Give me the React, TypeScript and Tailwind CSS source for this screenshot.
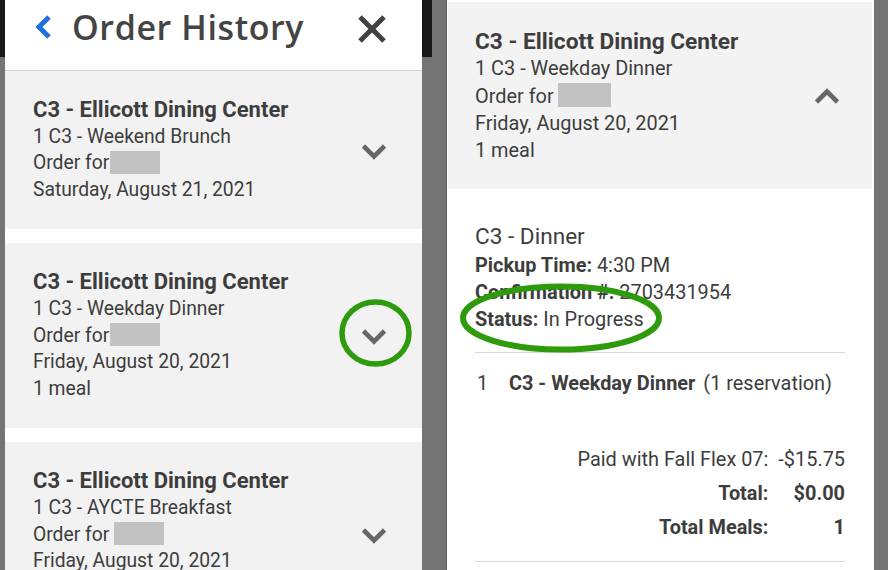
import React from "react";

const TEXT = "text-[#3d3d3d]";

function ChevronDown({ up = false, className = "" }: { up?: boolean; className?: string }) {
  return (
    <svg width="26" height="18" viewBox="0 0 26 18" className={`shrink-0 ${className}`}>
      <polyline
        points={up ? "2.5,15 13,4.5 23.5,15" : "2.5,3 13,13.5 23.5,3"}
        fill="none"
        stroke="#676767"
        strokeWidth="4.6"
        strokeLinejoin="miter"
      />
    </svg>
  );
}

function LeftCard({
  sub,
  date,
  meal,
  spaced,
}: {
  sub: string;
  date: string;
  meal?: boolean;
  spaced?: boolean;
}) {
  return (
    <div className="bg-[#f2f2f2] flex items-center pl-[28px] pr-[35px] pt-[26px] pb-[26px] shrink-0">
      <div className={`flex-1 ${TEXT} text-[19.3px] leading-[26.6px]`}>
        <div className="font-bold text-[22px]">C3 - Ellicott Dining Center</div>
        <div>{sub}</div>
        <div className="flex items-center">
          <span>Order for</span>
          <span
            className={`inline-block w-[50px] h-[23px] bg-[#c2c2c2] -mt-[2px] ${spaced ? "ml-[5px]" : "ml-[1px]"}`}
          />
        </div>
        <div>{date}</div>
        {meal && <div>1 meal</div>}
      </div>
      <ChevronDown className="mt-[3px]" />
    </div>
  );
}

export default function App() {
  return (
    <div className="w-[888px] h-[570px] bg-[#747474] flex overflow-hidden relative font-['Roboto',sans-serif]">
      {/* left strip */}
      <div className="w-[5px] shrink-0 flex flex-col">
        <div className="h-[57px] bg-[#181818]" />
      </div>

      {/* left panel */}
      <div className="w-[417px] shrink-0 bg-white flex flex-col">
        <div className="h-[71px] shrink-0 border-b border-[#d6d6d6] flex items-start">
          <div className="h-[54px] w-full flex items-center pl-[28px] pr-[35px]">
            <svg width="22" height="26" viewBox="0 0 22 26" className="shrink-0">
              <polyline points="16,3 6,13 16,23" fill="none" stroke="#1f6fdf" strokeWidth="5" strokeLinejoin="miter" />
            </svg>
            <div className="ml-[17px] flex-1 font-['Open_Sans',sans-serif] font-semibold text-[34px] leading-[40px] text-[#444444] tracking-[0.6px]">
              Order History
            </div>
            <svg width="30" height="30" viewBox="0 0 30 30" className="shrink-0 mt-[4px]">
              <line x1="3" y1="3" x2="27" y2="27" stroke="#414141" strokeWidth="5" />
              <line x1="27" y1="3" x2="3" y2="27" stroke="#414141" strokeWidth="5" />
            </svg>
          </div>
        </div>
        <LeftCard sub="1 C3 - Weekend Brunch" date="Saturday, August 21, 2021" />
        <div className="h-[14px] shrink-0" />
        <LeftCard sub="1 C3 - Weekday Dinner" date="Friday, August 20, 2021" meal />
        <div className="h-[14px] shrink-0" />
        <LeftCard sub="1 C3 - AYCTE Breakfast" date="Friday, August 20, 2021" meal spaced />
      </div>

      {/* middle gap */}
      <div className="w-[25px] shrink-0 flex">
        <div className="w-[10px] h-[57px] bg-[#181818]" />
        <div className="flex-1 border-r border-[#5f5f5f]" />
      </div>

      {/* right panel */}
      <div className="w-[427px] shrink-0 bg-white flex flex-col">
        <div className="mt-[2px] ml-[1px] mr-[2px] bg-[#f3f3f3] flex items-center pl-[27px] pr-[32px] pt-[26px] pb-[25px]">
          <div className={`flex-1 ${TEXT} text-[19.9px] leading-[27.3px]`}>
            <div className="font-bold text-[22.7px]">C3 - Ellicott Dining Center</div>
            <div>1 C3 - Weekday Dinner</div>
            <div className="flex items-center">
              <span>Order for</span>
              <span className="inline-block ml-[4px] -mt-[2px] w-[53px] h-[24px] bg-[#c2c2c2]" />
            </div>
            <div>Friday, August 20, 2021</div>
            <div>1 meal</div>
          </div>
          <ChevronDown up />
        </div>

        <div className={`pl-[28px] pr-[29px] pt-[33px] ${TEXT} text-[19.9px]`}>
          <div className="text-[22.6px] leading-[30px]">C3 - Dinner</div>
          <div className="leading-[27px]">
            <div>
              <span className="font-bold">Pickup Time:</span> 4:30 PM
            </div>
            <div>
              <span className="font-bold">Confirmation #:</span> 2703431954
            </div>
            <div>
              <span className="font-bold">Status:</span> In Progress
            </div>
          </div>
          <div className="mt-[19px] h-px bg-[#d9d9d9]" />
          <div className="pt-[17px] leading-[27px] flex">
            <span className="w-[34px] pl-[2px]">1</span>
            <span className="font-bold">C3 - Weekday Dinner</span>
            <span className="ml-[8px]">(1 reservation)</span>
          </div>
          <div className="mt-[46px] grid grid-cols-[auto_auto] justify-end gap-x-[10px] leading-[34px] text-right">
            <span>Paid with Fall Flex 07:</span>
            <span>-$15.75</span>
            <span className="font-bold">Total:</span>
            <span className="font-bold">$0.00</span>
            <span className="font-bold">Total Meals:</span>
            <span className="font-bold">1</span>
          </div>
          <div className="mt-[16px] h-px bg-[#d9d9d9]" />
        </div>
      </div>

      {/* annotations */}
      <svg className="absolute left-0 top-0 pointer-events-none" width="888" height="570">
        <ellipse cx="375.5" cy="333" rx="33.5" ry="31" fill="none" stroke="#2d9b0c" strokeWidth="5.5" />
        <ellipse cx="561" cy="318" rx="98" ry="31.5" fill="none" stroke="#2d9b0c" strokeWidth="6" />
      </svg>
    </div>
  );
}
